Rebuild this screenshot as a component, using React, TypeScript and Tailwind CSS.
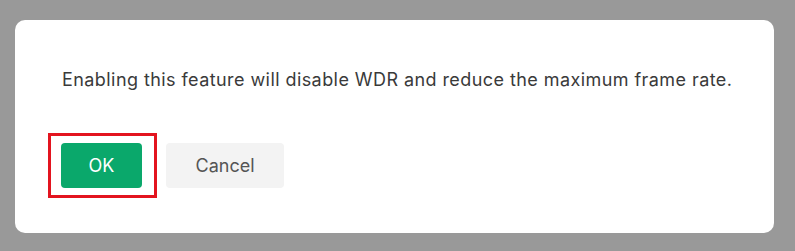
import React from 'react';

const App: React.FC = () => {
  return (
    <div className="w-[795px] h-[251px] bg-[#999999] pt-[20px] pl-[15px]" style={{ fontFamily: 'Inter, "Noto Sans", sans-serif' }}>
      <div className="w-[759px] h-[213px] bg-white rounded-[10px] pl-[33px] pt-[49px]">
        <p className="pl-[14px] text-[18px] leading-[22px] text-[#3a3a3a] tracking-[0.43px]">
          Enabling this feature will disable WDR and reduce the maximum frame rate.
        </p>
        <div className="flex items-center gap-[9px] mt-[42px]">
          <div className="border-[3px] border-[#e3141f] pl-[10px] pr-[12px] py-[7px]">
            <button className="w-[81px] h-[45px] rounded-[4px] bg-[#0aa86b] text-white text-[18px]">
              OK
            </button>
          </div>
          <button className="w-[118px] h-[45px] rounded-[4px] bg-[#f3f3f3] text-[#555555] text-[18px]">
            Cancel
          </button>
        </div>
      </div>
    </div>
  );
};

export default App;
